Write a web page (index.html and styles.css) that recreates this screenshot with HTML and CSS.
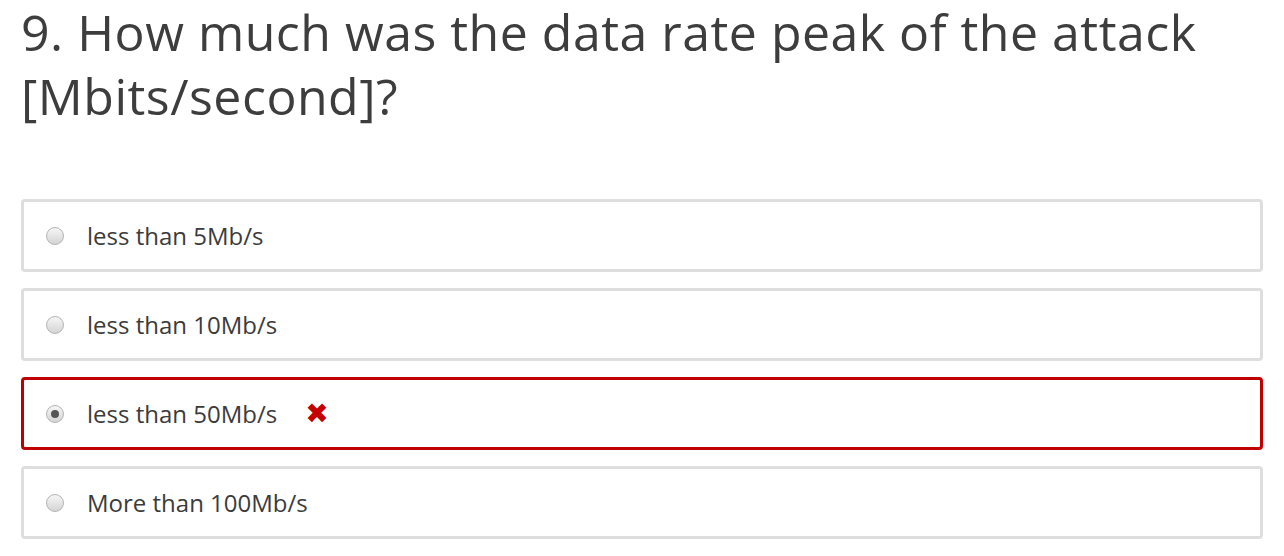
FILE: index.html
```html
<!DOCTYPE html>
<html>
<head>
<meta charset="utf-8">
<link rel="stylesheet" href="styles.css">
</head>
<body>
<div class="quiz">
  <h1 class="question">9. How much was the data rate peak of the attack [Mbits/second]?</h1>
  <div class="options">
    <label class="option">
      <span class="radio"></span>
      <span class="label">less than 5Mb/s</span>
    </label>
    <label class="option">
      <span class="radio"></span>
      <span class="label">less than 10Mb/s</span>
    </label>
    <label class="option option-wrong">
      <span class="radio radio-checked"></span>
      <span class="label">less than 50Mb/s</span>
      <span class="mark">✖</span>
    </label>
    <label class="option">
      <span class="radio"></span>
      <span class="label">More than 100Mb/s</span>
    </label>
  </div>
</div>
</body>
</html>
```

FILE: styles.css
```css
html, body {
  margin: 0;
  padding: 0;
  background: #ffffff;
}

body {
  font-family: "Open Sans", "Liberation Sans", sans-serif;
  color: #3b3b3b;
}

.quiz {
  padding: 0 21px 0 21px;
  width: 1242px;
}

.question {
  margin: 0;
  padding-top: 0;
  font-size: 50px;
  font-weight: 400;
  line-height: 64px;
  color: #3d3d3d;
  letter-spacing: 0.5px;
}

.options {
  margin-top: 71px;
  display: flex;
  flex-direction: column;
  gap: 16px;
}

.option {
  display: flex;
  align-items: center;
  height: 67px;
  border: 3px solid #dedede;
  border-radius: 4px;
  padding-left: 22px;
  font-size: 24px;
  color: #3b3b3b;
}

.option-wrong {
  border-color: #c00000;
}

.radio {
  width: 16px;
  height: 16px;
  border-radius: 50%;
  border: 1px solid #b4b4b4;
  background: linear-gradient(#f6f6f6, #d4d4d4);
  flex: none;
  display: flex;
  align-items: center;
  justify-content: center;
}

.radio-checked::after {
  content: "";
  width: 8px;
  height: 8px;
  border-radius: 50%;
  background: #555555;
}

.label {
  margin-left: 23px;
}

.mark {
  margin-left: 28px;
  color: #c40000;
  font-family: "DejaVu Sans", sans-serif;
  font-size: 28px;
  line-height: 1;
}
```
